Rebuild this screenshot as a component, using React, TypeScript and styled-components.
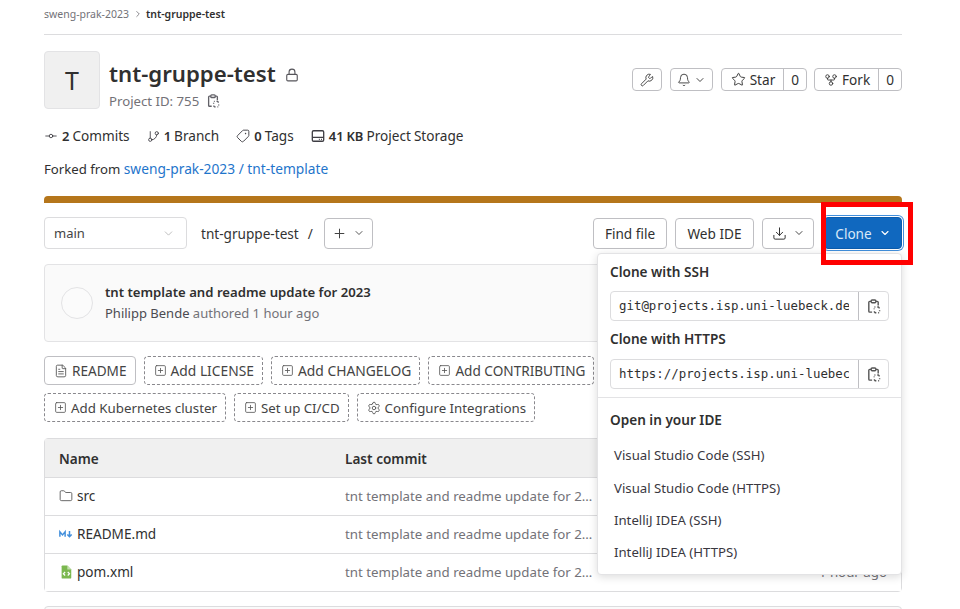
import React from 'react';
import styled, { createGlobalStyle } from 'styled-components';
import {
  Bell,
  ChevronDown,
  ChevronRight,
  Download,
  FileText,
  Folder,
  GitBranch,
  GitCommitHorizontal,
  GitFork,
  Lock,
  Plus,
  Settings,
  SquarePlus,
  Star,
  Tag,
  Wrench,
} from 'lucide-react';

const GlobalStyle = createGlobalStyle`
  html, body {
    margin: 0;
    padding: 0;
    background: #fff;
    color: #303030;
    font-family: "Noto Sans", "Liberation Sans", sans-serif;
    font-size: 13.6px;
  }
  * { box-sizing: border-box; }
`;

const Page = styled.div`
  position: relative;
  width: 960px;
  height: 609px;
  overflow: hidden;
  padding: 0 58px 0 44px;
`;

const Breadcrumbs = styled.div`
  display: flex;
  align-items: center;
  gap: 3.5px;
  height: 35px;
  padding-bottom: 7px;
  border-bottom: 1px solid #dcdcde;
  font-size: 10.5px;
  color: #737278;
  svg { color: #737278; }
  b { color: #303030; font-weight: 600; }
`;

const ProjectHeader = styled.div`
  display: flex;
  justify-content: space-between;
  margin-top: 16px;
`;

const ProjectInfo = styled.div`
  display: flex;
  gap: 9px;
`;

const Avatar = styled.div`
  width: 56px;
  height: 58px;
  display: flex;
  align-items: center;
  justify-content: center;
  background: #f0f0f0;
  border: 1px solid #e3e3e5;
  border-radius: 4px;
  font-size: 25px;
  color: #303030;
`;

const TitleBlock = styled.div`
  padding-top: 8px;
`;

const Title = styled.h1`
  display: flex;
  align-items: center;
  gap: 9px;
  margin: 0;
  font-size: 22.2px;
  line-height: 30px;
  font-weight: 600;
  color: #303030;
  svg { color: #55545a; margin-top: 1px; }
`;

const ProjectId = styled.div`
  display: flex;
  align-items: center;
  gap: 7px;
  font-size: 13.2px;
  line-height: 20px;
  margin-top: 2px;
  color: #737278;
`;

const HeaderActions = styled.div`
  display: flex;
  gap: 8px;
  padding-top: 17px;
`;

const SmallButton = styled.div`
  display: flex;
  align-items: center;
  justify-content: center;
  gap: 3px;
  height: 23px;
  min-width: 30px;
  padding: 0 6px;
  border: 1px solid #bfbfc3;
  border-radius: 4px;
  color: #303030;
  svg { color: #333; }
`;

const ButtonGroup = styled.div`
  display: flex;
  height: 23px;
  border: 1px solid #bfbfc3;
  border-radius: 4px;
  & + & { margin-left: -1px; }
`;

const GroupLabel = styled.div`
  display: flex;
  align-items: center;
  gap: 4px;
  padding: 0 8px 0 9px;
  border-right: 1px solid #bfbfc3;
  svg { color: #333; }
`;

const GroupCount = styled.div`
  display: flex;
  align-items: center;
  padding: 0 7px;
`;

const Stats = styled.div`
  display: flex;
  gap: 17px;
  margin-top: 15px;
  line-height: 20px;
`;

const Stat = styled.div`
  display: flex;
  align-items: center;
  gap: 4px;
  word-spacing: -0.5px;
  b { font-weight: 600; font-size: 13px; }
  svg { color: #3f3e44; }
`;

const TagIcon = styled(Tag)`
  transform: rotate(90deg);
`;

const Forked = styled.div`
  margin-top: 13px;
  line-height: 20px;
  font-size: 13.2px;
`;

const Link = styled.span`
  color: #1f75cb;
  font-size: 13.75px;
`;

const LanguageBar = styled.div`
  height: 7px;
  margin-top: 17px;
  border-radius: 4px 4px 0 0;
  background: #b5761b;
`;

const RepoToolbar = styled.div`
  display: flex;
  justify-content: space-between;
  align-items: flex-start;
  margin-top: 14px;
`;

const ToolbarSide = styled.div`
  display: flex;
  align-items: center;
`;

const BranchSelect = styled.div`
  width: 143px;
  height: 32px;
  display: flex;
  align-items: center;
  justify-content: space-between;
  padding: 0 11px 0 9px;
  border: 1px solid #dcdcde;
  border-radius: 4px;
  font-size: 13px;
  color: #444;
  svg { color: #aaa; }
`;

const RepoName = styled.span`
  margin: 0 11px 0 14px;
  color: #333;
  i { font-style: normal; margin-left: 9px; }
`;

const AddButton = styled.div`
  width: 49px;
  height: 31px;
  display: flex;
  align-items: center;
  justify-content: center;
  gap: 6px;
  border: 1px solid #bfbfc3;
  border-radius: 4px;
  svg { color: #444; }
`;

const ActionButton = styled.div<{ $width: number }>`
  width: ${(p) => p.$width}px;
  height: 31px;
  display: flex;
  align-items: center;
  justify-content: center;
  gap: 6px;
  margin-left: 8px;
  border: 1px solid #bfbfc3;
  border-radius: 4px;
  color: #303030;
  svg { color: #333; }
`;

const CloneButton = styled.div`
  height: 32px;
  width: 78px;
  display: flex;
  align-items: center;
  justify-content: center;
  gap: 7px;
  margin-left: 10px;
  background: #1068bf;
  border: 1px solid #0b5cad;
  border-radius: 4px;
  box-shadow: 0 0 0 1px #fff, 0 0 0 2px #428fdc;
  color: #d9e8f7;
  svg { color: #fff; }
`;

const RedFrame = styled.div`
  position: absolute;
  left: 821px;
  top: 202px;
  width: 92px;
  height: 63px;
  border: 5px solid #ff0000;
  pointer-events: none;
  z-index: 3;
`;

const CommitBox = styled.div`
  display: flex;
  align-items: center;
  gap: 12px;
  height: 78px;
  margin-top: 15px;
  padding: 0 16px 2px;
  background: #fafafa;
  border: 1px solid #e3e3e5;
  border-radius: 4px;
`;

const CommitAvatar = styled.div`
  width: 32px;
  height: 32px;
  margin-top: 2px;
  border-radius: 50%;
  border: 1px solid #e3e3e5;
  background: #fbfbfb;
`;

const CommitTitle = styled.div`
  font-size: 13.15px;
  font-weight: 600;
  line-height: 20px;
`;

const CommitMeta = styled.div`
  font-size: 13px;
  line-height: 20px;
  color: #737278;
  margin-top: 1px;
  span { color: #4c4b51; }
`;

const Shortcuts = styled.div`
  display: flex;
  flex-wrap: wrap;
  gap: 8px;
  width: 560px;
  margin-top: 14px;
`;

const Shortcut = styled.div<{ $dashed?: boolean; $size?: number }>`
  height: 29px;
  display: flex;
  align-items: center;
  gap: 4px;
  padding: 0 8px 0 9px;
  border: 1px ${(p) => (p.$dashed ? 'dashed #89888d' : 'solid #bfbfc3')};
  border-radius: 4px;
  font-size: ${(p) => p.$size ?? 13.6}px;
  color: #444;
  white-space: nowrap;
  svg { color: #555; }
`;

const FileTable = styled.div`
  margin-top: 16px;
  border: 1px solid #dcdcde;
  border-radius: 4px;
`;

const Row = styled.div<{ $head?: boolean }>`
  display: grid;
  grid-template-columns: 286px 1fr 100px;
  align-items: center;
  height: 38px;
  padding: 0 14px ${(p) => (p.$head ? 0 : 2)}px;
  background: ${(p) => (p.$head ? '#f0f0f0' : '#fff')};
  font-weight: ${(p) => (p.$head ? 600 : 400)};
  & + & { border-top: 1px solid #dcdcde; }
`;

const NameCell = styled.div`
  display: flex;
  align-items: center;
  gap: 4px;
  color: #303030;
`;

const CommitCell = styled.div`
  font-size: 13.3px;
  color: #737278;
  width: 248px;
  overflow: hidden;
  white-space: nowrap;
  text-overflow: ellipsis;
`;

const HeadCell = styled.div`
  color: #303030;
`;

const AgeCell = styled.div`
  text-align: right;
  color: #737278;
  font-size: 13.3px;
`;

const NextPanel = styled.div`
  height: 30px;
  margin-top: 14px;
  background: #fafafa;
  border: 1px solid #dcdcde;
  border-radius: 4px;
`;

const Popover = styled.div`
  position: absolute;
  left: 597px;
  top: 253px;
  width: 305px;
  height: 322px;
  z-index: 2;
  background: #fff;
  border: 1px solid #e3e3e5;
  border-radius: 4px;
  box-shadow: 0 2px 8px rgba(0, 0, 0, 0.14);
`;

const PopoverSection = styled.div<{ $top?: number }>`
  padding: ${(p) => p.$top ?? 8}px 12px 0;
`;

const PopoverHeading = styled.div`
  font-size: 13.6px;
  font-weight: 600;
  line-height: 20px;
  color: #303030;
`;

const CopyField = styled.div<{ $top?: number }>`
  display: flex;
  height: 30px;
  margin: ${(p) => p.$top ?? 9}px 0 8px;
  border: 1px solid #dcdcde;
  border-radius: 4px;
`;

const CopyValue = styled.div`
  width: 230px;
  margin: 0 9px 0 8px;
  overflow: hidden;
  white-space: nowrap;
  font-family: "DejaVu Sans Mono", "Liberation Mono", monospace;
  font-size: 12.4px;
  line-height: 28px;
  color: #303030;
`;

const CopyButton = styled.div`
  flex: 1;
  display: flex;
  align-items: center;
  justify-content: center;
  border-left: 1px solid #bfbfc3;
  color: #555;
`;

const Divider = styled.div`
  height: 1px;
  margin-top: 5px;
  background: #e3e3e5;
`;

const IdeList = styled.div`
  margin-top: 9px;
`;

const IdeItem = styled.div`
  height: 32.4px;
  display: flex;
  align-items: center;
  padding-left: 4px;
  font-size: 13.2px;
  color: #3a383f;
`;

const ClipboardIcon = ({ size = 14, color = '#626168' }: { size?: number; color?: string }) => (
  <svg width={size} height={size} viewBox="0 0 16 16" fill="none" stroke={color} strokeWidth="1.5">
    <path d="M5.5 2.5H4a1 1 0 0 0-1 1V13a1 1 0 0 0 1 1h2.5" />
    <path d="M10.5 2.5H12a1 1 0 0 1 1 1V7" />
    <rect x="5.5" y="1" width="5" height="3" rx="1" />
    <path d="M9 8.5h1M12 8.5h1.2l.8.8V10M14.5 12v1M14 14.7h-1M11 14.7h-1.2l-.8-.8V13M8.7 11v-1" />
  </svg>
);

const MarkdownIcon = () => (
  <svg width="14" height="14" viewBox="0 0 16 16" fill="none" stroke="#428fdc" strokeWidth="1.7">
    <path d="M1 11V5.5l3 3.5 3-3.5V11" />
    <path d="M12 4.5V10M9.5 8.5 12 11l2.5-2.5" />
  </svg>
);

const XmlIcon = () => (
  <svg width="14" height="14" viewBox="0 0 16 16">
    <path d="M3 1.5A1 1 0 0 1 4 .5h5.5L14 5v9.5a1 1 0 0 1-1 1H4a1 1 0 0 1-1-1z" fill="#7bb84f" />
    <path d="M9.5.5V5H14z" fill="#c4e0ae" />
    <path d="M7 8 5 10l2 2M10 8l2 2-2 2" fill="none" stroke="#fff" strokeWidth="1.4" />
  </svg>
);

const files = [
  { name: 'src', icon: <Folder size={14} strokeWidth={1.5} color="#555" /> },
  { name: 'README.md', icon: <MarkdownIcon /> },
  { name: 'pom.xml', icon: <XmlIcon /> },
];

const ideLinks = [
  'Visual Studio Code (SSH)',
  'Visual Studio Code (HTTPS)',
  'IntelliJ IDEA (SSH)',
  'IntelliJ IDEA (HTTPS)',
];

const addShortcuts = [
  { label: 'Add LICENSE', size: 13.8 },
  { label: 'Add CHANGELOG', size: 13.85 },
  { label: 'Add CONTRIBUTING', size: 13.6 },
  { label: 'Add Kubernetes cluster', size: 13.3 },
  { label: 'Set up CI/CD', size: 13.25 },
];

const App: React.FC = () => {
  return (
    <Page>
      <GlobalStyle />
      <Breadcrumbs>
        sweng-prak-2023 <ChevronRight size={10} /> <b>tnt-gruppe-test</b>
      </Breadcrumbs>

      <ProjectHeader>
        <ProjectInfo>
          <Avatar>T</Avatar>
          <TitleBlock>
            <Title>
              tnt-gruppe-test <Lock size={14} strokeWidth={1.9} />
            </Title>
            <ProjectId>
              Project ID: 755 <ClipboardIcon />
            </ProjectId>
          </TitleBlock>
        </ProjectInfo>
        <HeaderActions>
          <SmallButton>
            <Wrench size={14} strokeWidth={1.5} />
          </SmallButton>
          <SmallButton>
            <Bell size={14} strokeWidth={1.5} />
            <ChevronDown size={12} strokeWidth={1.8} />
          </SmallButton>
          <ButtonGroup>
            <GroupLabel>
              <Star size={15} strokeWidth={1.5} /> Star
            </GroupLabel>
            <GroupCount>0</GroupCount>
          </ButtonGroup>
          <ButtonGroup>
            <GroupLabel>
              <GitFork size={14} strokeWidth={1.5} /> Fork
            </GroupLabel>
            <GroupCount>0</GroupCount>
          </ButtonGroup>
        </HeaderActions>
      </ProjectHeader>

      <Stats>
        <Stat>
          <GitCommitHorizontal size={14} strokeWidth={1.5} /> <span><b>2</b> Commits</span>
        </Stat>
        <Stat>
          <GitBranch size={13} strokeWidth={1.6} /> <span><b>1</b> Branch</span>
        </Stat>
        <Stat>
          <TagIcon size={14} strokeWidth={1.6} /> <span><b>0</b> Tags</span>
        </Stat>
        <Stat>
          <svg width="14" height="14" viewBox="0 0 16 16" fill="none" stroke="#3f3e44" strokeWidth="1.5">
            <rect x="1.5" y="2" width="13" height="12" rx="1.5" />
            <path d="M1.5 9.5h13M9 11.8h1M11.5 11.8h1" />
          </svg>
          <span><b>41 KB</b> Project Storage</span>
        </Stat>
      </Stats>

      <Forked>
        Forked from <Link>sweng-prak-2023 / tnt-template</Link>
      </Forked>

      <LanguageBar />

      <RepoToolbar>
        <ToolbarSide>
          <BranchSelect>
            main <ChevronDown size={13} strokeWidth={1.4} />
          </BranchSelect>
          <RepoName>
            tnt-gruppe-test<i>/</i>
          </RepoName>
          <AddButton>
            <Plus size={15} strokeWidth={1.6} />
            <ChevronDown size={12} strokeWidth={1.8} />
          </AddButton>
        </ToolbarSide>
        <ToolbarSide>
          <ActionButton $width={74}>Find file</ActionButton>
          <ActionButton $width={79}>Web IDE</ActionButton>
          <ActionButton $width={52}>
            <Download size={15} strokeWidth={1.6} />
            <ChevronDown size={12} strokeWidth={1.8} />
          </ActionButton>
          <CloneButton>
            Clone <ChevronDown size={12} strokeWidth={2.2} />
          </CloneButton>
        </ToolbarSide>
      </RepoToolbar>

      <CommitBox>
        <CommitAvatar />
        <div>
          <CommitTitle>tnt template and readme update for 2023</CommitTitle>
          <CommitMeta>
            <span>Philipp Bende</span> authored 1 hour ago
          </CommitMeta>
        </div>
      </CommitBox>

      <Shortcuts>
        <Shortcut>
          <FileText size={14} strokeWidth={1.5} /> README
        </Shortcut>
        {addShortcuts.map((item) => (
          <Shortcut $dashed $size={item.size} key={item.label}>
            <SquarePlus size={13} strokeWidth={1.5} /> {item.label}
          </Shortcut>
        ))}
        <Shortcut $dashed $size={13.25}>
          <Settings size={14} strokeWidth={1.5} /> Configure Integrations
        </Shortcut>
      </Shortcuts>

      <FileTable>
        <Row $head>
          <HeadCell>Name</HeadCell>
          <HeadCell>Last commit</HeadCell>
          <HeadCell />
        </Row>
        {files.map((file) => (
          <Row key={file.name}>
            <NameCell>
              {file.icon} {file.name}
            </NameCell>
            <CommitCell>tnt template and readme update for 2023</CommitCell>
            <AgeCell>1 hour ago</AgeCell>
          </Row>
        ))}
      </FileTable>

      <NextPanel />

      <RedFrame />

      <Popover>
        <PopoverSection>
          <PopoverHeading>Clone with SSH</PopoverHeading>
          <CopyField>
            <CopyValue>git@projects.isp.uni-luebeck.de:sweng-prak-2023/tnt-gruppe-test.git</CopyValue>
            <CopyButton>
              <ClipboardIcon size={15} color="#555" />
            </CopyButton>
          </CopyField>
          <PopoverHeading>Clone with HTTPS</PopoverHeading>
          <CopyField $top={10}>
            <CopyValue>https://projects.isp.uni-luebeck.de/sweng-prak-2023/tnt-gruppe-test.git</CopyValue>
            <CopyButton>
              <ClipboardIcon size={15} color="#555" />
            </CopyButton>
          </CopyField>
        </PopoverSection>
        <Divider />
        <PopoverSection $top={12}>
          <PopoverHeading>Open in your IDE</PopoverHeading>
          <IdeList>
            {ideLinks.map((link) => (
              <IdeItem key={link}>{link}</IdeItem>
            ))}
          </IdeList>
        </PopoverSection>
      </Popover>
    </Page>
  );
};

export default App;
